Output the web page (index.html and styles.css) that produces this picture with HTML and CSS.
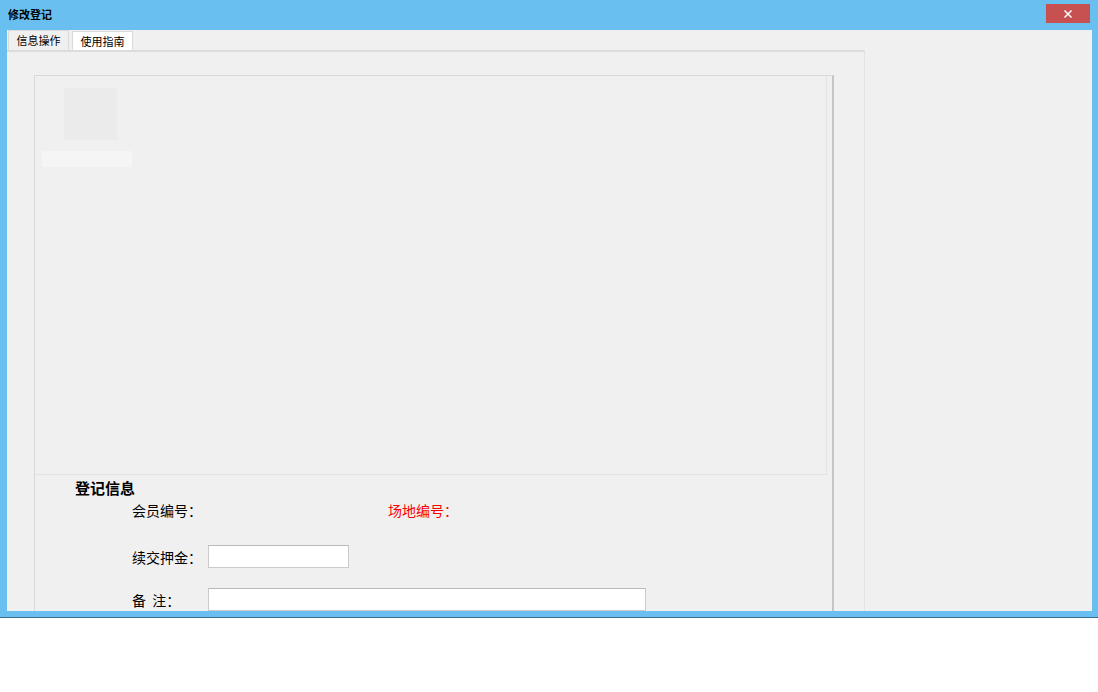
FILE: index.html
```html
<!DOCTYPE html>
<html>
<head>
<meta charset="utf-8">
<title>修改登记</title>
<link rel="stylesheet" href="styles.css">
</head>
<body>

<div class="window">
	<div class="titlebar">
		<span class="title">修改登记</span>
		<div class="close">
			<svg width="10" height="10" viewBox="0 0 10 10"><path d="M1.5 1.5L8.5 8.5M8.5 1.5L1.5 8.5" stroke="#fff" stroke-width="1.5"/></svg>
		</div>
	</div>
	<div class="client">
		<div class="tabs">
			<div class="tab current">信息操作</div>
			<div class="tab">使用指南</div>
		</div>
		<div class="panel">
			<div class="group">
				<div class="preview">
					<div class="thumb"></div>
					<div class="caption"></div>
				</div>
				<div class="form">
					<div class="form-title">登记信息</div>
					<div class="row">
						<span class="label">会员编号：</span>
						<span class="label site">场地编号：</span>
					</div>
					<div class="row gap1">
						<span class="label">续交押金：</span>
						<input class="field short" type="text">
					</div>
					<div class="row gap2">
						<span class="label">备&nbsp;&nbsp;注：</span>
						<input class="field long" type="text">
					</div>
				</div>
			</div>
		</div>
	</div>
</div>

</body>
</html>
```

FILE: styles.css
```css
body {
	margin: 0;
	background: #fff;
	font-family: "Noto Sans CJK SC", "Liberation Sans", sans-serif;
	color: #000;
}

.window {
	width: 1098px;
	height: 617px;
	background: #69c0f0;
	border-bottom: 1px solid #3b6b88;
	display: flex;
	flex-direction: column;
}

.titlebar {
	height: 30px;
	display: flex;
	align-items: flex-start;
	position: relative;
}
.title {
	font-size: 11px;
	font-weight: bold;
	line-height: 14px;
	margin: 7px 0 0 8px;
}
.close {
	position: absolute; top: 4px; left: 1046px;
	width: 44px; height: 19px;
	background: #c75050;
	display: flex; align-items: center; justify-content: center;
}

.client {
	flex: 1;
	margin: 0 6px 6px 7px;
	background: #f0f0f0;
	display: flex;
	flex-direction: column;
	overflow: hidden;
}

.tabs {
	height: 20px;
	display: flex;
	align-items: flex-end;
	padding-left: 1px;
}
.tab {
	width: 59px;
	height: 18px;
	border: 1px solid #dadada;
	border-bottom: 0;
	background: #fff;
	font-size: 11px;
	line-height: 18px;
	text-align: center;
}
.tab.current {
	height: 19px;
	background: #f0f0f0;
	margin-right: 3px;
}

.panel {
	flex: 1;
	width: 858px;
	box-sizing: border-box;
	border-top: 2px solid #dcdcdc;
	border-right: 1px solid #e3e3e3;
	background: #f0f0f0;
	padding: 23px 0 0 27px;
}

.group {
	width: 797px;
	height: 560px;
	border-top: 1px solid #d8d8d8;
	border-left: 1px solid #d8d8d8;
	border-right: 2px solid #c6c6c6;
}

.preview {
	width: 792px;
	height: 399px;
	box-sizing: border-box;
	border-right: 1px solid #e3e3e3;
	border-bottom: 1px solid #e3e3e3;
	padding-top: 12px;
}
.thumb {
	width: 53px; height: 52px;
	margin-left: 29px;
	background: #ebebeb;
}
.caption {
	width: 90px; height: 16px;
	margin: 11px 0 0 7px;
	background: #f5f5f5;
}

.form-title {
	font-size: 15px;
	font-weight: bold;
	line-height: 20px;
	margin: 3px 0 0 40px;
}
.row {
	display: flex;
	align-items: center;
	height: 23px;
	padding-left: 97px;
	margin-top: 0;
	font-size: 14px;
	line-height: 20px;
}
.row.gap1 { margin-top: 24px; }
.row.gap2 { margin-top: 20px; }
.label {
	width: 76px;
	white-space: nowrap;
}
.label.site {
	margin-left: 180px;
	color: #f00;
}
.field {
	height: 23px;
	box-sizing: border-box;
	border: 1px solid #cbcbcb;
	border-top-color: #b9b9b9;
	background: #fff;
	margin: 0;
	padding: 0 3px;
}
.field.short { width: 141px; }
.field.long { width: 438px; }
```
